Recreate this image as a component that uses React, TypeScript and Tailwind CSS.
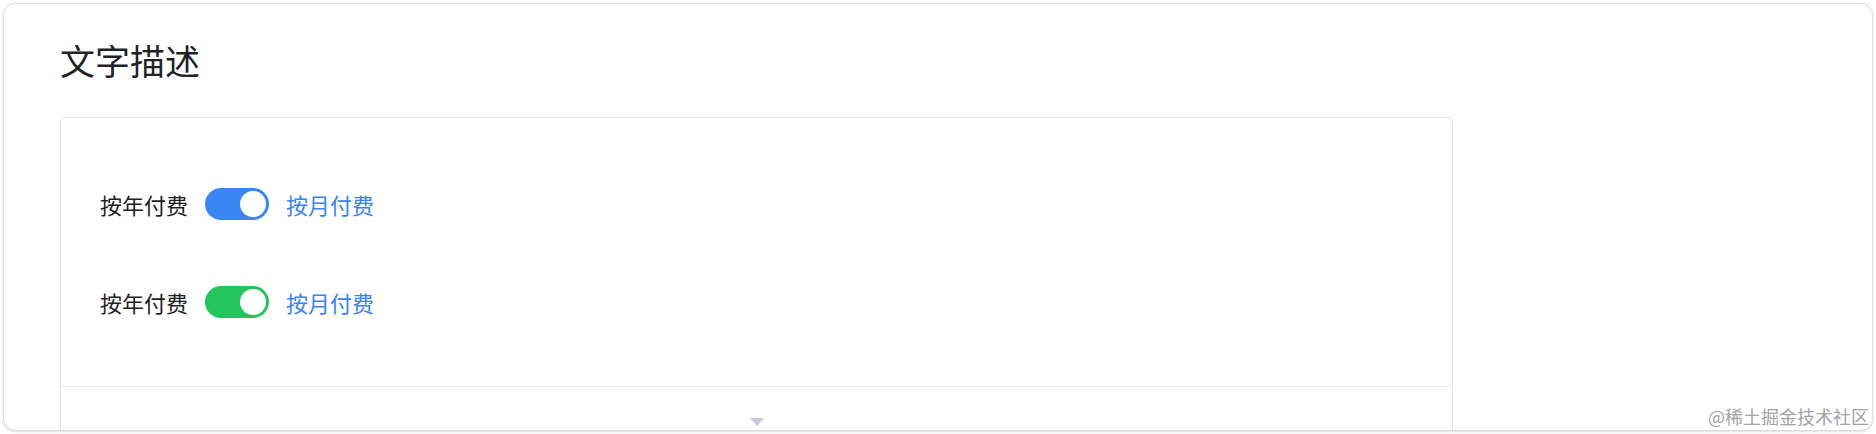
import React, { useState } from 'react'

const font = { fontFamily: '"Noto Sans CJK SC", "Noto Sans", sans-serif' }

const Toggle = ({ on, color, onClick }: { on: boolean; color: string; onClick: () => void }) => {
    return (
        <button
            type="button"
            onClick={onClick}
            className={`flex h-8 w-16 items-center rounded-full px-[3px] ${on ? 'justify-end' : 'justify-start'} ${color}`}
        >
            <span className="block h-[26px] w-[26px] rounded-full bg-white" />
        </button>
    )
}

const PriceRow = ({ color }: { color: string }) => {
    const [monthly, setMonthly] = useState(true)

    return (
        <div className="flex items-center gap-[17px] text-[22px] leading-[32px]">
            <span className={monthly ? 'text-[#1f1f1f]' : 'text-[#3b82f6]'}>按年付费</span>
            <Toggle on={monthly} color={monthly ? color : 'bg-[#dcdfe6]'} onClick={() => setMonthly(!monthly)} />
            <span className={monthly ? 'text-[#3b82f6]' : 'text-[#1f1f1f]'}>按月付费</span>
        </div>
    )
}

const App = () => {
    return (
        <div className="h-[434px] w-full bg-white p-[3px]" style={font}>
            <div className="relative h-[428px] overflow-hidden rounded-[12px] border border-[#dcdcdc] bg-white px-[56px] pt-[38px] shadow-[0_1px_2px_rgba(0,0,0,0.12)]">
                <h2 className="text-[35px] leading-[35px] text-[#1f2329]">文字描述</h2>

                <div className="mt-[40px] w-[1393px] rounded-[4px] border border-[#e8e8e8]">
                    <div className="flex flex-col gap-[66px] pb-[68px] pl-[39px] pt-[70px]">
                        <PriceRow color="bg-[#3b86f7]" />
                        <PriceRow color="bg-[#22c55e]" />
                    </div>
                    <div className="flex justify-center border-t border-[#ececec] pb-[20px] pt-[31px]">
                        <svg width="14" height="8" viewBox="0 0 14 8">
                            <path d="M0 0 L14 0 L7 8 Z" fill="#c6c9dc" />
                        </svg>
                    </div>
                </div>

                {/* watermark */}
                <span className="absolute bottom-[4px] right-[3px] text-[18px] leading-[20px] text-[#a3a3a3]">
                    @稀土掘金技术社区
                </span>
            </div>
        </div>
    )
}

export default App
